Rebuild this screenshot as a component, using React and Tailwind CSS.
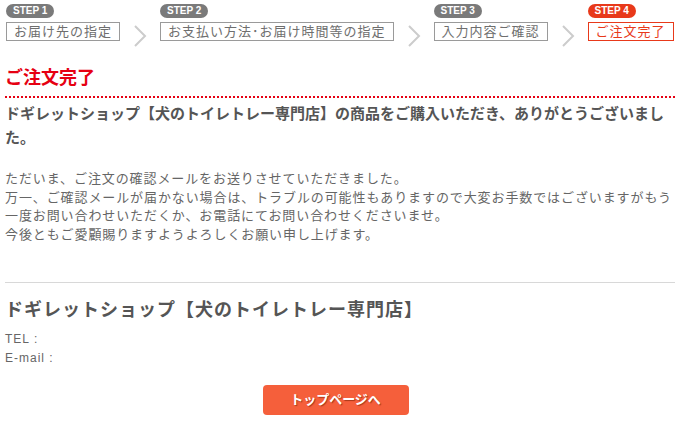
import React from 'react';

const steps = [
    { no: 1, label: 'お届け先の指定' },
    { no: 2, label: 'お支払い方法･お届け時間等の指定' },
    { no: 3, label: '入力内容ご確認' },
    { no: 4, label: 'ご注文完了', active: true },
];

const Chevron = () => (
    <svg width="14" height="22" viewBox="0 0 14 22" className="mt-[21px]">
        <polyline points="2,1 12,11 2,21" fill="none" stroke="#cccccc" strokeWidth="2" />
    </svg>
);

const App = () => {
    return (
        <div
            className="w-[680px] h-[424px] bg-white px-[5px] overflow-hidden"
            style={{ fontFamily: '"Liberation Sans", "Noto Sans CJK JP", sans-serif' }}
        >
            {/* Step bar */}
            <div className="flex items-start pt-[4px] pl-[1px] gap-[13px]">
                {steps.map((s, i) => (
                    <React.Fragment key={s.no}>
                        {i > 0 && <Chevron />}
                        <div className="flex flex-col items-start">
                            <span
                                className={`h-[14px] px-[7px] rounded-full text-white text-[10px] font-bold leading-[14px] ${s.active ? 'bg-[#e8391a]' : 'bg-[#7a7a7a]'}`}
                            >
                                STEP {s.no}
                            </span>
                            <span
                                className={`mt-[4px] border px-[7px] h-[19px] leading-[17px] text-[13px] tracking-[1px] whitespace-nowrap ${s.active ? 'border-[#e8391a] text-[#e8391a]' : 'border-[#9a9a9a] text-[#6e6e6e]'}`}
                            >
                                {s.label}
                            </span>
                        </div>
                    </React.Fragment>
                ))}
            </div>

            {/* Title */}
            <h1 className="mt-[20px] text-[18px] leading-[22px] font-bold text-[#e60012] pb-[7px] border-b-2 border-dotted border-[#e60012]">
                ご注文完了
            </h1>

            <p className="mt-[4px] text-[15px] leading-[24px] font-bold text-[#555]">
                ドギレットショップ【犬のトイレトレー専門店】の商品をご購入いただき、ありがとうございました。
            </p>

            <p className="mt-[20px] text-[13px] tracking-[0.9px] leading-[18.7px] text-[#666]">
                ただいま、ご注文の確認メールをお送りさせていただきました。<br />
                万一、ご確認メールが届かない場合は、トラブルの可能性もありますので大変お手数ではございますがもう一度お問い合わせいただくか、お電話にてお問い合わせくださいませ。<br />
                今後ともご愛顧賜りますようよろしくお願い申し上げます。
            </p>

            <hr className="mt-[37px] border-t border-[#d8d8d8]" />

            {/* Shop info */}
            <h2 className="mt-[14px] text-[18px] leading-[26px] tracking-[1px] font-bold text-[#555]">
                ドギレットショップ【犬のトイレトレー専門店】
            </h2>
            <div className="mt-[7px] text-[12px] leading-[19px] tracking-[1px] text-[#666]">
                <p>TEL :</p>
                <p>E-mail :</p>
            </div>

            <div className="flex justify-center pr-[9px] mt-[17px]">
                <button
                    className="w-[146px] h-[30px] rounded-[4px] bg-[#f55f3b] text-white text-[13px] font-bold"
                    style={{ textShadow: '1px 1px 1px rgba(120,30,0,0.6)' }}
                >
                    トップページへ
                </button>
            </div>
        </div>
    );
};

export default App;
